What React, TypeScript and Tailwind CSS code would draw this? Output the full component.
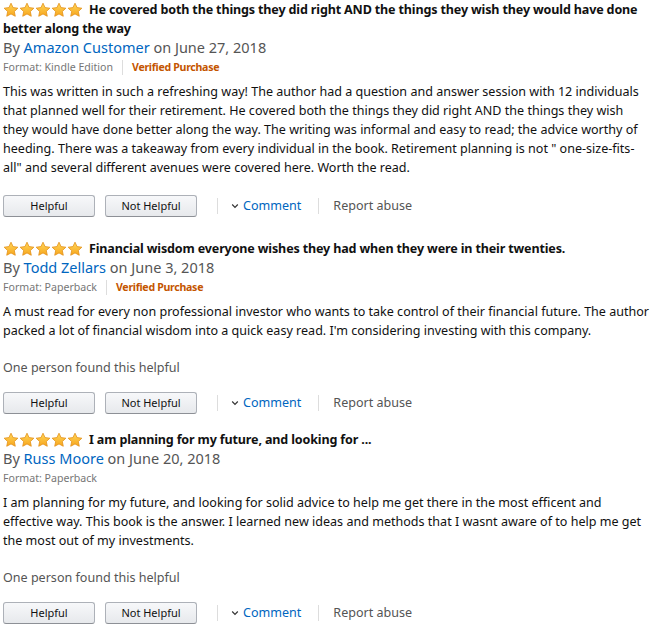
import React from 'react';

interface Review {
    id: number;
    title: string;
    author: string;
    date: string;
    format: string;
    verified: boolean;
    body: string;
    helpful?: string;
    gapAfter: string;
}

const reviews: Review[] = [
    {
        id: 1,
        title: 'He covered both the things they did right AND the things they wish they would have done better along the way',
        author: 'Amazon Customer',
        date: 'June 27, 2018',
        format: 'Kindle Edition',
        verified: true,
        body: 'This was written in such a refreshing way! The author had a question and answer session with 12 individuals that planned well for their retirement. He covered both the things they did right AND the things they wish they would have done better along the way. The writing was informal and easy to read; the advice worthy of heeding. There was a takeaway from every individual in the book. Retirement planning is not " one-size-fits-all" and several different avenues were covered here. Worth the read.',
        gapAfter: 'mb-[22px]',
    },
    {
        id: 2,
        title: 'Financial wisdom everyone wishes they had when they were in their twenties.',
        author: 'Todd Zellars',
        date: 'June 3, 2018',
        format: 'Paperback',
        verified: true,
        body: "A must read for every non professional investor who wants to take control of their financial future. The author packed a lot of financial wisdom into a quick easy read. I'm considering investing with this company.",
        helpful: 'One person found this helpful',
        gapAfter: 'mb-[16px]',
    },
    {
        id: 3,
        title: 'I am planning for my future, and looking for ...',
        author: 'Russ Moore',
        date: 'June 20, 2018',
        format: 'Paperback',
        verified: false,
        body: 'I am planning for my future, and looking for solid advice to help me get there in the most efficent and effective way. This book is the answer. I learned new ideas and methods that I wasnt aware of to help me get the most out of my investments.',
        helpful: 'One person found this helpful',
        gapAfter: 'mb-0',
    },
];

function Star({ id }: { id: string }) {
    return (
        <svg width="16" height="16" viewBox="0 0 24 24" className="shrink-0">
            <defs>
                <linearGradient id={id} x1="0" y1="0" x2="0" y2="1">
                    <stop offset="0" stopColor="#ffd75a" />
                    <stop offset="1" stopColor="#f7a51c" />
                </linearGradient>
            </defs>
            <path
                d="M12 1.8l3.1 6.6 7.2.9-5.3 5 1.4 7.1L12 17.9l-6.4 3.5L7 14.3l-5.3-5 7.2-.9z"
                fill={`url(#${id})`}
                stroke="#e2901a"
                strokeWidth="1.2"
                strokeLinejoin="round"
            />
        </svg>
    );
}

function Stars({ rid }: { rid: number }) {
    return (
        <span className="inline-flex h-[19px] items-center align-top mr-[6px]">
            {[0, 1, 2, 3, 4].map(i => <Star key={i} id={`st-${rid}-${i}`} />)}
        </span>
    );
}

function ActionBar({ top }: { top: string }) {
    return (
        <div className={`flex items-center ${top}`}>
            <button className="w-[92px] h-[22px] rounded-[3px] border border-[#adb1b8] border-b-[#8d9096] bg-gradient-to-b from-[#f7f8fa] to-[#e7e9ec] text-[11px] text-[#111]">
                Helpful
            </button>
            <button className="w-[92px] h-[22px] ml-[10px] rounded-[3px] border border-[#adb1b8] border-b-[#8d9096] bg-gradient-to-b from-[#f7f8fa] to-[#e7e9ec] text-[11px] text-[#111]">
                Not Helpful
            </button>
            <span className="ml-[20px] w-px h-[16px] bg-[#ddd]" />
            <span className="ml-[13px] flex items-center text-[#0066c0]">
                <svg width="8" height="6" viewBox="0 0 8 6" className="mr-[4px]">
                    <path d="M1.2 1.5L4 4.3 6.8 1.5" stroke="#333" strokeWidth="1.2" fill="none" />
                </svg>
                Comment
            </span>
            <span className="ml-[17px] w-px h-[16px] bg-[#ddd]" />
            <span className="ml-[14px] text-[#555]">Report abuse</span>
        </div>
    );
}

function ReviewItem({ review }: { review: Review }) {
    return (
        <div className={review.gapAfter}>
            <div className="font-bold text-[#111] leading-[19px] tracking-[-0.15px]">
                <Stars rid={review.id} />
                {review.title}
            </div>
            <div className="leading-[19px] text-[14.5px] text-[#555]">
                By <span className="text-[#0066c0]">{review.author}</span> on {review.date}
            </div>
            <div className="flex items-center h-[21px] text-[10.6px]">
                <span className="text-[#767676]">Format: {review.format}</span>
                {review.verified && (
                    <>
                        <span className="mx-[9px] w-px h-[15px] bg-[#ddd]" />
                        <span className="text-[#c45500] font-bold tracking-[-0.3px]">Verified Purchase</span>
                    </>
                )}
            </div>
            <p className="mt-[4px] text-[#111] leading-[19px]">{review.body}</p>
            {review.helpful && (
                <p className="mt-[18px] text-[#555] leading-[19px]">{review.helpful}</p>
            )}
            <ActionBar top={review.helpful ? 'mt-[15px]' : 'mt-[18px]'} />
        </div>
    );
}

export default function App() {
    return (
        <div className="w-[656px] h-[627px] overflow-hidden bg-white pl-[3px] pr-[6px] text-[12.55px] font-['Noto_Sans',sans-serif]">
            {reviews.map(r => <ReviewItem key={r.id} review={r} />)}
        </div>
    );
}
